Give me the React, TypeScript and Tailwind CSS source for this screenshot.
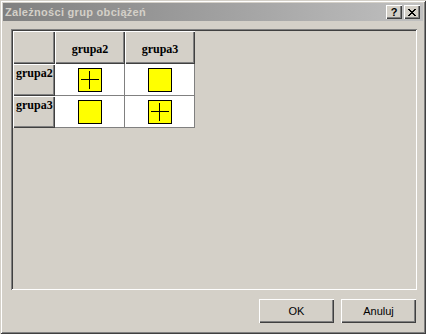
import React from "react";

const raised =
  "shadow-[inset_1px_1px_0_#ffffff,inset_-1px_-1px_0_#404040,inset_-2px_-2px_0_#808080]";

function Box({ plus }: { plus?: boolean }) {
  return (
    <div className="relative w-[24px] h-[24px] bg-[#ffff00] border border-black">
      {plus && (
        <>
          <div className="absolute left-[2px] right-[2px] top-[10px] h-px bg-black" />
          <div className="absolute top-[2px] bottom-[2px] left-[10px] w-px bg-black" />
        </>
      )}
    </div>
  );
}

function HeadCell({ label, row }: { label?: string; row?: boolean }) {
  return (
    <div
      className={`bg-[#d4d0c8] ${raised} flex ${
        row ? "items-start justify-start pl-[3px] pt-[3px]" : "items-center justify-center pt-[2px]"
      } text-[12px] font-bold text-black leading-none`}
      style={{ fontFamily: '"Liberation Serif", "DejaVu Serif", serif' }}
    >
      {label}
    </div>
  );
}

function DataCell({ plus }: { plus?: boolean }) {
  return (
    <div className="bg-white border-r border-b border-[#808080] flex items-center justify-center">
      <Box plus={plus} />
    </div>
  );
}

function Btn({ label }: { label: string }) {
  return (
    <div className="w-[75px] h-[24px] bg-[#d4d0c8] flex items-center justify-center text-[11px] text-black shadow-[inset_1px_1px_0_#ffffff,inset_-1px_-1px_0_#404040,inset_-2px_-2px_0_#808080]">
      {label}
    </div>
  );
}

function TitleBtn({ children }: { children: React.ReactNode }) {
  return (
    <div className="w-[16px] h-[14px] bg-[#d4d0c8] flex items-center justify-center text-[11px] font-bold text-black leading-none shadow-[inset_1px_1px_0_#ffffff,inset_-1px_-1px_0_#404040,inset_-2px_-2px_0_#808080]">
      {children}
    </div>
  );
}

export default function App() {
  return (
    <div
      className="w-[426px] h-[334px] bg-[#d4d0c8] p-[3px] flex flex-col shadow-[inset_1px_1px_0_#d4d0c8,inset_-1px_-1px_0_#404040,inset_2px_2px_0_#ffffff,inset_-2px_-2px_0_#808080]"
      style={{ fontFamily: '"Liberation Sans", Arial, sans-serif' }}
    >
      <div className="h-[18px] flex items-center bg-gradient-to-r from-[#808080] to-[#c0c0c0] pl-[2px] pr-[3px]">
        <span className="text-[11px] font-bold text-[#d4d0c8] flex-1 leading-none tracking-[0.3px]">
          Zależności grup obciążeń
        </span>
        <div className="flex gap-[2px]">
          <TitleBtn>?</TitleBtn>
          <TitleBtn>
            <svg width="8" height="7" viewBox="0 0 8 7">
              <path d="M0 0L7 7M1 0L8 7M7 0L0 7M8 0L1 7" stroke="black" strokeWidth="1" />
            </svg>
          </TitleBtn>
        </div>
      </div>
      <div className="flex-1 flex flex-col pl-[8px] pt-[8px]">
        <div className="w-[406px] h-[261px] shadow-[inset_1px_1px_0_#808080,inset_-1px_-1px_0_#ffffff,inset_2px_2px_0_#404040] p-[2px]">
          <div className="grid grid-cols-[42px_70px_70px] grid-rows-[33px_32px_32px] w-fit">
            <HeadCell />
            <HeadCell label="grupa2" />
            <HeadCell label="grupa3" />
            <HeadCell label="grupa2" row />
            <DataCell plus />
            <DataCell />
            <HeadCell label="grupa3" row />
            <DataCell />
            <DataCell plus />
          </div>
        </div>
        <div className="flex justify-end gap-[7px] pr-[7px] mt-[9px]">
          <Btn label="OK" />
          <Btn label="Anuluj" />
        </div>
      </div>
    </div>
  );
}
